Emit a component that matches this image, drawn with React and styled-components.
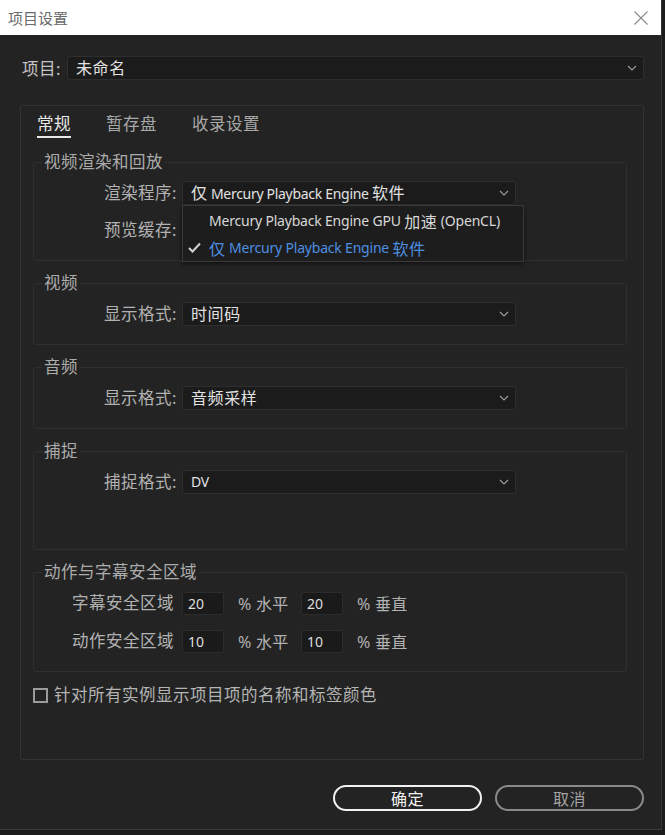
import styled, { createGlobalStyle } from 'styled-components';

const GlobalStyle = createGlobalStyle`
    html, body {
        margin: 0;
        padding: 0;
        background: #1c1c1c;
    }
    * {
        box-sizing: border-box;
    }
`;

const FONT = `"Noto Sans", "Noto Sans CJK SC", sans-serif`;

function Chevron() {
    return (
        <svg width="10" height="6" viewBox="0 0 10 6">
            <path d="M1 1 L5 5 L9 1" fill="none" stroke="#9a9a9a" strokeWidth="1.2" />
        </svg>
    );
}

function CheckMark() {
    return (
        <svg width="13" height="11" viewBox="0 0 13 11">
            <path d="M1 6 L4.5 9.5 L12 1.5" fill="none" stroke="#d4d4d4" strokeWidth="2" />
        </svg>
    );
}

function Dropdown({ children, width }) {
    return (
        <Select $width={width}>
            <SelectValue>{children}</SelectValue>
            <Chevron />
        </Select>
    );
}

export default function App() {
    return (
        <>
            <GlobalStyle />
            <Window>
                <TitleBar>
                    <TitleText>项目设置</TitleText>
                    <svg width="14" height="14" viewBox="0 0 14 14">
                        <path d="M0.5 0.5 L13.5 13.5 M13.5 0.5 L0.5 13.5" stroke="#8a8a8a" strokeWidth="1.1" />
                    </svg>
                </TitleBar>
                <Body>
                    <ProjectRow>
                        <ProjectLabel>项目:</ProjectLabel>
                        <Dropdown>
                            <Cjk>未命名</Cjk>
                        </Dropdown>
                    </ProjectRow>

                    <Panel>
                        <Tabs>
                            <Tab $active>常规</Tab>
                            <Tab>暂存盘</Tab>
                            <Tab>收录设置</Tab>
                        </Tabs>

                        <Group>
                            <Legend>视频渲染和回放</Legend>
                            <Rows>
                                <Row>
                                    <Label>渲染程序:</Label>
                                    <MenuAnchor>
                                        <Dropdown width={334}>
                                            <Cjk>仅</Cjk> Mercury Playback Engine <Cjk>软件</Cjk>
                                        </Dropdown>
                                        <Menu>
                                            <MenuItem>
                                                Mercury Playback Engine GPU <Cjk>加速</Cjk> (OpenCL)
                                            </MenuItem>
                                            <MenuItem $selected>
                                                <Check>
                                                    <CheckMark />
                                                </Check>
                                                <Cjk>仅</Cjk> Mercury Playback Engine <Cjk>软件</Cjk>
                                            </MenuItem>
                                        </Menu>
                                    </MenuAnchor>
                                </Row>
                                <Row>
                                    <Label>预览缓存:</Label>
                                    <Dropdown width={334} />
                                </Row>
                            </Rows>
                        </Group>

                        <Group>
                            <Legend>视频</Legend>
                            <Row>
                                <Label>显示格式:</Label>
                                <Dropdown width={334}>
                                    <Cjk>时间码</Cjk>
                                </Dropdown>
                            </Row>
                        </Group>

                        <Group>
                            <Legend>音频</Legend>
                            <Row>
                                <Label>显示格式:</Label>
                                <Dropdown width={334}>
                                    <Cjk>音频采样</Cjk>
                                </Dropdown>
                            </Row>
                        </Group>

                        <Group $bottom={55}>
                            <Legend>捕捉</Legend>
                            <Row>
                                <Label>捕捉格式:</Label>
                                <Dropdown width={334}>DV</Dropdown>
                            </Row>
                        </Group>

                        <Group>
                            <Legend>动作与字幕安全区域</Legend>
                            <Rows $gap={14}>
                                <Row $gap={8}>
                                    <Label $width={140}>字幕安全区域</Label>
                                    <NumberBox>20</NumberBox>
                                    <Unit>% 水平</Unit>
                                    <NumberBox>20</NumberBox>
                                    <Unit>% 垂直</Unit>
                                </Row>
                                <Row $gap={8}>
                                    <Label $width={140}>动作安全区域</Label>
                                    <NumberBox>10</NumberBox>
                                    <Unit>% 水平</Unit>
                                    <NumberBox>10</NumberBox>
                                    <Unit>% 垂直</Unit>
                                </Row>
                            </Rows>
                        </Group>

                        <CheckRow>
                            <CheckBox />
                            <CheckLabel>针对所有实例显示项目项的名称和标签颜色</CheckLabel>
                        </CheckRow>
                    </Panel>

                    <Buttons>
                        <Button $primary>确定</Button>
                        <Button>取消</Button>
                    </Buttons>
                </Body>
            </Window>
        </>
    );
}

const Window = styled.div`
    width: 662px;
    height: 830px;
    background: #232323;
    border-right: 1px solid #343434;
    border-bottom: 1px solid #3a3a3a;
    font-family: ${FONT};
    display: flex;
    flex-direction: column;
`;

const TitleBar = styled.div`
    height: 35px;
    background: #ffffff;
    display: flex;
    align-items: center;
    justify-content: space-between;
    padding: 0 13px 0 8px;
`;

const TitleText = styled.span`
    font-size: 15px;
    color: #6a6a6a;
`;

const Body = styled.div`
    padding: 21px 17px 0 20px;
    display: flex;
    flex-direction: column;
`;

const Cjk = styled.span`
    font-size: 16px;
    letter-spacing: 0.6px;
`;

const ProjectRow = styled.div`
    display: flex;
    align-items: center;
    gap: 6px;
    padding-left: 2px;
`;

const ProjectLabel = styled.span`
    font-size: 16.5px;
    letter-spacing: 0.5px;
    color: #c4c4c4;
`;

const Select = styled.div`
    width: ${(p) => (p.$width ? `${p.$width}px` : 'auto')};
    flex: ${(p) => (p.$width ? 'none' : '1')};
    height: 24px;
    background: #1b1b1b;
    border: 1px solid #2e2e2e;
    border-radius: 3px;
    display: flex;
    align-items: center;
    justify-content: space-between;
    padding: 0 6px 0 8px;
`;

const SelectValue = styled.span`
    font-size: 14px;
    letter-spacing: -0.3px;
    line-height: 20px;
    color: #e2e2e2;
    white-space: pre;
`;

const Panel = styled.div`
    margin-top: 25px;
    height: 655px;
    border: 1px solid #333333;
    border-radius: 2px;
    padding: 7px 16px 0 12px;
    display: flex;
    flex-direction: column;
`;

const Tabs = styled.div`
    display: flex;
    gap: 35px;
    padding-left: 4px;
    margin-bottom: 15px;
`;

const Tab = styled.span`
    font-size: 16.5px;
    letter-spacing: 0.5px;
    line-height: 22px;
    padding-bottom: 1px;
    color: ${(p) => (p.$active ? '#e8e8e8' : '#a8a8a8')};
    border-bottom: 2px solid ${(p) => (p.$active ? '#e8e8e8' : 'transparent')};
`;

const Group = styled.fieldset`
    margin: 0 0 13px;
    padding: 10px 0 ${(p) => p.$bottom || 18}px;
    border: 1px solid #2f2f2f;
    border-radius: 3px;
    min-width: 0;
`;

const Legend = styled.legend`
    font-size: 16.5px;
    letter-spacing: 0.5px;
    line-height: 18px;
    color: #acacac;
    padding: 0 2px;
    margin-left: 8px;
`;

const Rows = styled.div`
    display: flex;
    flex-direction: column;
    gap: ${(p) => p.$gap || 13}px;
`;

const Row = styled.div`
    display: flex;
    align-items: center;
    gap: ${(p) => p.$gap || 5}px;
`;

const Label = styled.span`
    width: ${(p) => p.$width || 143}px;
    text-align: right;
    font-size: 16.5px;
    letter-spacing: 0.5px;
    line-height: 20px;
    color: #b2b2b2;
    white-space: nowrap;
`;

const MenuAnchor = styled.div`
    position: relative;
`;

const Menu = styled.div`
    position: absolute;
    top: 24px;
    left: 0;
    width: 342px;
    height: 57px;
    background: #1d1d1d;
    border: 1px solid #3a3a3a;
    box-shadow: 0 2px 4px rgba(0, 0, 0, 0.5);
    display: flex;
    flex-direction: column;
    padding-top: 1px;
    z-index: 2;
`;

const MenuItem = styled.div`
    height: 27px;
    display: flex;
    align-items: center;
    padding-left: ${(p) => (p.$selected ? '5px' : '26px')};
    font-size: 14px;
    letter-spacing: -0.2px;
    color: ${(p) => (p.$selected ? '#4d8fe0' : '#d8d8d8')};
    white-space: pre;
`;

const Check = styled.span`
    width: 21px;
    display: flex;
    align-items: center;
`;

const NumberBox = styled.div`
    width: 42px;
    height: 23px;
    background: #1a1a1a;
    border: 1px solid #2c2c2c;
    border-radius: 2px;
    font-size: 14px;
    color: #dedede;
    padding-left: 5px;
    line-height: 21px;
`;

const Unit = styled.span`
    font-size: 16px;
    letter-spacing: 0.3px;
    color: #b2b2b2;
    margin: 0 4px 0 6px;
    width: 51px;
    white-space: nowrap;
`;

const CheckRow = styled.div`
    display: flex;
    align-items: center;
    gap: 6px;
    height: 20px;
`;

const CheckBox = styled.div`
    width: 15px;
    height: 15px;
    border: 2px solid #9a9a9a;
`;

const CheckLabel = styled.span`
    font-size: 16.5px;
    letter-spacing: 0.5px;
    line-height: 20px;
    color: #b4b4b4;
`;

const Buttons = styled.div`
    display: flex;
    justify-content: flex-end;
    gap: 13px;
    margin-top: 25px;
`;

const Button = styled.div`
    width: 149px;
    height: 26px;
    border: 2px solid ${(p) => (p.$primary ? '#f2f2f2' : '#8a8a8a')};
    border-radius: 13px;
    display: flex;
    align-items: center;
    justify-content: center;
    font-size: 16px;
    letter-spacing: 0.5px;
    color: ${(p) => (p.$primary ? '#f2f2f2' : '#a2a2a2')};
`;
